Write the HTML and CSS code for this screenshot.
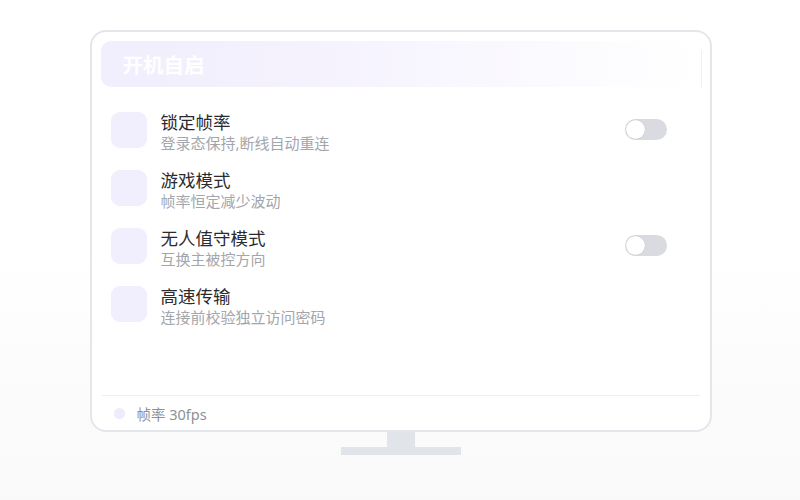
FILE: index.html
```html
<!DOCTYPE html>
<html lang="zh">
<head>
<meta charset="utf-8">
<link rel="stylesheet" href="styles.css">
</head>
<body>
<div class="stage">
  <div class="monitor">
    <div class="screen">
      <div class="header">
        <span class="title">开机自启</span>
        <span class="header-edge"></span>
      </div>
      <div class="list">
        <div class="row">
          <div class="icon"></div>
          <div class="text">
            <div class="name">锁定帧率</div>
            <div class="desc">登录态保持,断线自动重连</div>
          </div>
          <div class="toggle"><span class="knob"></span></div>
        </div>
        <div class="row">
          <div class="icon"></div>
          <div class="text">
            <div class="name">游戏模式</div>
            <div class="desc">帧率恒定减少波动</div>
          </div>
        </div>
        <div class="row">
          <div class="icon"></div>
          <div class="text">
            <div class="name">无人值守模式</div>
            <div class="desc">互换主被控方向</div>
          </div>
          <div class="toggle"><span class="knob"></span></div>
        </div>
        <div class="row">
          <div class="icon"></div>
          <div class="text">
            <div class="name">高速传输</div>
            <div class="desc">连接前校验独立访问密码</div>
          </div>
        </div>
      </div>
      <div class="footer">
        <span class="dot"></span>
        <span class="fps">帧率 30fps</span>
      </div>
    </div>
    <div class="neck"></div>
    <div class="base"></div>
  </div>
</div>
</body>
</html>
```

FILE: styles.css
```css
* { box-sizing: border-box; }
html, body { margin: 0; padding: 0; }
body {
  width: 800px;
  height: 500px;
  font-family: "Noto Sans", "Noto Sans CJK SC", sans-serif;
  background: linear-gradient(to bottom, #ffffff 0%, #ffffff 50%, #f9f9fa 100%);
  overflow: hidden;
}
.stage {
  padding-top: 30px;
  display: flex;
  justify-content: center;
}
.monitor {
  width: 622px;
  margin-left: 1px;
  display: flex;
  flex-direction: column;
  align-items: center;
}
.screen {
  width: 622px;
  height: 402px;
  border: 2px solid #e3e6eb;
  border-radius: 16px;
  background: #ffffff;
  padding: 9px 9px 0 9px;
  display: flex;
  flex-direction: column;
}
.header {
  height: 46px;
  border-radius: 10px;
  background: linear-gradient(to right, #f1eefd 0%, #f5f2fe 35%, #ffffff 100%);
  display: flex;
  align-items: center;
  padding-left: 22px;
  position: relative;
}
.title {
  color: #ffffff;
  font-size: 20.5px;
  font-weight: 700;
}
.header-edge {
  position: absolute;
  right: -1px;
  top: 9px;
  bottom: 0;
  width: 1px;
  background: #eef0f3;
}
.list {
  flex: 1;
  padding: 24px 0 0 10px;
  display: flex;
  flex-direction: column;
  gap: 16px;
}
.row {
  display: flex;
  align-items: flex-start;
  height: 42px;
}
.icon {
  width: 36px;
  height: 36px;
  margin-top: 1px;
  border-radius: 9px;
  background: #f1eefd;
  flex: none;
}
.text {
  margin-left: 14px;
  flex: 1;
  display: flex;
  flex-direction: column;
  gap: 1px;
}
.name {
  font-size: 17.5px;
  line-height: 22px;
  color: #2b2b2f;
}
.desc {
  font-size: 15px;
  line-height: 19px;
  color: #a3a6ac;
}
.toggle {
  width: 42px;
  height: 21px;
  border-radius: 11px;
  background: #d9dbe1;
  margin-right: 34px;
  margin-top: 8px;
  padding: 1px;
  display: flex;
  align-items: center;
}
.knob {
  width: 19px;
  height: 19px;
  border-radius: 50%;
  background: #ffffff;
  box-shadow: 0 0 1px rgba(0,0,0,0.25);
}
.footer {
  height: 35px;
  border-top: 1px solid #eceef2;
  margin-right: 1px;
  margin-left: 1px;
  display: flex;
  align-items: center;
  padding-left: 12px;
}
.dot {
  width: 11px;
  height: 11px;
  border-radius: 50%;
  background: #efebfd;
}
.fps {
  margin-left: 12px;
  font-size: 14.5px;
  color: #8e9096;
}
.neck {
  width: 28px;
  height: 15px;
  background: #e1e4e8;
}
.base {
  width: 120px;
  height: 8px;
  background: #e1e4e8;
}
```
